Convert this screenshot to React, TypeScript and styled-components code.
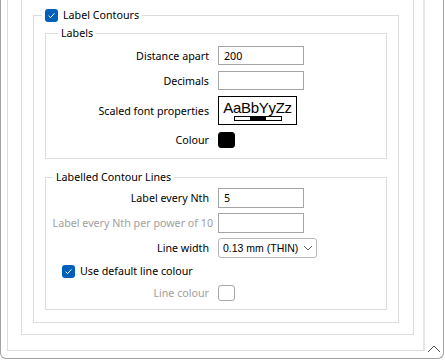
import React from "react";
import styled, { createGlobalStyle } from "styled-components";

const GlobalStyle = createGlobalStyle`
  html, body { margin: 0; padding: 0; background: #fff; }
  body {
    font-family: "Noto Sans", "Open Sans", sans-serif;
    font-size: 10.7px;
    font-weight: 400;
    color: #000;
  }
  * { box-sizing: border-box; }
`;

const Frame = styled.div`
  width: 444px;
  height: 359px;
  display: flex;
  align-items: stretch;
  border: 1px solid #a3a3a3;
  border-top: none;
  border-radius: 0 0 6px 6px;
  padding: 0 0 7px 6px;
  background: #fff;
`;

const OuterPanel = styled.div`
  width: 418px;
  display: flex;
  flex-direction: column;
  border: 1px solid #dcdcdc;
  border-top: none;
  border-right: 2px solid #e6e6e6;
  padding: 0 9px 15px 13px;
`;

const InnerPanel = styled.div`
  flex: 1;
  display: flex;
  flex-direction: column;
  border: 1px solid #dcdcdc;
  border-top: none;
  padding: 7px 14px 11px 11px;
`;

const ScrollCorner = styled.div`
  flex: 1;
  display: flex;
  align-items: flex-end;
  padding: 0 0 0 2px;
  margin-bottom: -2px;
`;

const Group = styled.fieldset<{ $fill?: boolean; $top?: number; $padTop?: number; $padBottom?: number }>`
  margin: ${(p) => p.$top ?? 0}px 0 0 0;
  min-width: 0;
  border: 1px solid #dcdcdc;
  padding: ${(p) => p.$padTop ?? 0}px 0 ${(p) => p.$padBottom ?? 0}px 0;
  flex: ${(p) => (p.$fill ? 1 : "none")};
`;

const OuterGroup = styled(Group)`
  padding: 0 11px 11px 11px;
`;

const Legend = styled.legend<{ $offset: number }>`
  margin-left: ${(p) => p.$offset}px;
  padding: 0 3px;
  line-height: 16px;
  display: flex;
  align-items: center;
  gap: 5px;
`;

const FormGrid = styled.div<{ $gap: number }>`
  display: grid;
  grid-template-columns: 163px 1fr;
  column-gap: 9px;
  row-gap: ${(p) => p.$gap}px;
  align-items: center;
`;

const FieldLabel = styled.div<{ $disabled?: boolean; $spill?: number }>`
  text-align: right;
  white-space: nowrap;
  line-height: 16px;
  color: ${(p) => (p.$disabled ? "#a0a0a0" : "#000")};
  margin-right: ${(p) => -(p.$spill ?? 0)}px;
`;

const TextBox = styled.div<{ $h: number }>`
  width: 86px;
  height: ${(p) => p.$h}px;
  border: 1px solid #a5a5a5;
  padding: 0 5px;
  display: flex;
  align-items: center;
  line-height: 16px;
  background: #fff;
`;

const FontSample = styled.div`
  width: 79px;
  height: 29px;
  border: 1px solid #000;
  display: flex;
  flex-direction: column;
  align-items: center;
  padding-top: 3px;
`;

const SampleText = styled.span`
  font-family: "Liberation Sans", Arial, sans-serif;
  font-size: 15px;
  line-height: 16px;
  letter-spacing: -0.3px;
`;

const Swatch = styled.div<{ $colour?: string }>`
  width: 17px;
  height: 16px;
  border-radius: 3px;
  background: ${(p) => p.$colour ?? "#fff"};
  border: 1px solid ${(p) => (p.$colour ? p.$colour : "#a8a8a8")};
`;

const SwatchRow = styled.div<{ $h: number }>`
  height: ${(p) => p.$h}px;
  display: flex;
  align-items: center;
`;

const Select = styled.div`
  width: 99px;
  height: 20px;
  border: 1px solid #b8b8b8;
  border-radius: 3px;
  display: flex;
  align-items: center;
  justify-content: space-between;
  padding: 0 3px 0 4px;
  font-family: "Liberation Sans", Arial, sans-serif;
  font-size: 10.5px;
  white-space: nowrap;
`;

const CheckRow = styled.label`
  grid-column: 1 / -1;
  height: 16px;
  margin-left: 16px;
  display: flex;
  align-items: center;
  gap: 5px;
`;

const CheckBox = styled.span`
  width: 13px;
  height: 13px;
  border-radius: 3px;
  background: #005fb8;
  display: inline-flex;
  align-items: center;
  justify-content: center;
`;

const Check = () => (
  <CheckBox>
    <svg width="9" height="9" viewBox="0 0 9 9">
      <path d="M1.6 4.7 L3.6 6.6 L7.4 2.4" fill="none" stroke="#fff" strokeWidth="1" />
    </svg>
  </CheckBox>
);

const LineSample = () => (
  <svg width="48" height="5" viewBox="0 0 48 5">
    <rect x="0.5" y="0.5" width="47" height="4" fill="#fff" stroke="#000" />
    <rect x="16" y="0" width="16" height="5" fill="#000" />
  </svg>
);

const ChevronDown = () => (
  <svg width="10" height="6" viewBox="0 0 10 6">
    <path d="M1 1 L5 5 L9 1" fill="none" stroke="#606060" strokeWidth="1" />
  </svg>
);

const ChevronUp = () => (
  <svg width="14" height="8" viewBox="0 0 14 8">
    <path d="M1 7 L7 1 L13 7" fill="none" stroke="#5a5a5a" strokeWidth="1" />
  </svg>
);

export default function App() {
  return (
    <>
      <GlobalStyle />
      <Frame>
        <OuterPanel>
          <InnerPanel>
            <OuterGroup $fill>
              <Legend $offset={-3}>
                <Check />
                <span>Label Contours</span>
              </Legend>

              <Group $top={2} $padTop={5} $padBottom={9}>
                <Legend $offset={12}>Labels</Legend>
                <FormGrid $gap={6}>
                  <FieldLabel>Distance apart</FieldLabel>
                  <TextBox $h={19}>200</TextBox>
                  <FieldLabel>Decimals</FieldLabel>
                  <TextBox $h={19} />
                  <FieldLabel>Scaled font properties</FieldLabel>
                  <FontSample>
                    <SampleText>AaBbYyZz</SampleText>
                    <LineSample />
                  </FontSample>
                  <FieldLabel>Colour</FieldLabel>
                  <SwatchRow $h={18}>
                    <Swatch $colour="#000" />
                  </SwatchRow>
                </FormGrid>
              </Group>

              <Group $top={10} $padTop={3} $padBottom={7}>
                <Legend $offset={7}>Labelled Contour Lines</Legend>
                <FormGrid $gap={5}>
                  <FieldLabel>Label every Nth</FieldLabel>
                  <TextBox $h={20}>5</TextBox>
                  <FieldLabel $disabled $spill={4}>
                    Label every Nth per power of 10
                  </FieldLabel>
                  <TextBox $h={20} />
                  <FieldLabel>Line width</FieldLabel>
                  <Select>
                    <span>0.13 mm (THIN)</span>
                    <ChevronDown />
                  </Select>
                  <CheckRow>
                    <Check />
                    <span>Use default line colour</span>
                  </CheckRow>
                  <FieldLabel $disabled>Line colour</FieldLabel>
                  <SwatchRow $h={18}>
                    <Swatch />
                  </SwatchRow>
                </FormGrid>
              </Group>
            </OuterGroup>
          </InnerPanel>
        </OuterPanel>
        <ScrollCorner>
          <ChevronUp />
        </ScrollCorner>
      </Frame>
    </>
  );
}
